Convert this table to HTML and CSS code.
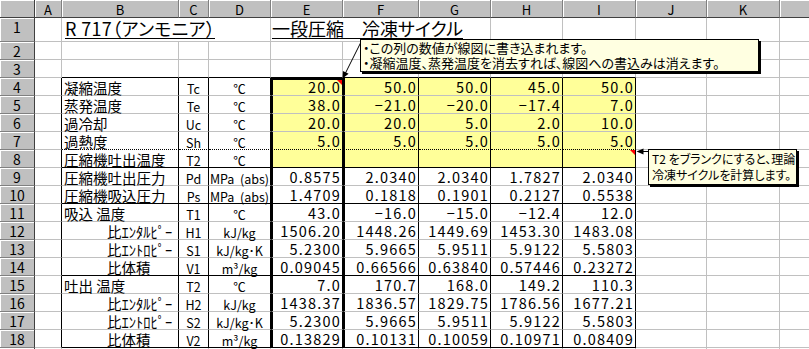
FILE: index.html
```html
<!DOCTYPE html>
<html lang="ja">
<head>
<meta charset="utf-8">
<title>R717 一段圧縮 冷凍サイクル</title>
<link rel="stylesheet" href="styles.css">
</head>
<body>
<div class="wrap">
  <div class="sheet">
    <div class="corner"></div><div class="ch">A</div><div class="ch">B</div><div class="ch">C</div><div class="ch">D</div><div class="ch">E</div><div class="ch">F</div><div class="ch">G</div><div class="ch">H</div><div class="ch">I</div><div class="ch">J</div><div class="ch">K</div><div class="ch"></div>

    <div class="rh">1</div><div></div>
    <div class="title title1 s3"><span>R 717（アンモニア）</span></div>
    <div class="title title2 s3"><span>一段圧縮　冷凍サイクル</span></div>
    <div></div><div></div><div></div><div></div><div></div>

    <div class="rh">2</div><div></div><div></div><div></div><div></div><div></div><div></div><div></div><div></div><div></div><div></div><div></div><div></div>

    <div class="rh">3</div><div></div><div class="tb"></div><div class="tb"></div><div class="tb"></div><div class="tb"></div><div class="tb"></div><div class="tb"></div><div class="tb"></div><div class="tb"></div><div></div><div></div><div></div>

    <div class="rh">4</div><div class="bk"></div>
    <div class="bk lbl">凝縮温度</div><div class="bk sym">Tc</div><div class="bk unit">℃</div>
    <div class="bk e top y num note">20.0</div><div class="bk f y num">50.0</div><div class="bk y num">50.0</div><div class="bk y num">45.0</div><div class="bk y num">50.0</div>
    <div></div><div></div><div></div>

    <div class="rh">5</div><div class="bk"></div>
    <div class="bk lbl">蒸発温度</div><div class="bk sym">Te</div><div class="bk unit">℃</div>
    <div class="bk e y num">38.0</div><div class="bk f y num">−21.0</div><div class="bk y num">−20.0</div><div class="bk y num">−17.4</div><div class="bk y num">7.0</div>
    <div></div><div></div><div></div>

    <div class="rh">6</div><div class="bk"></div>
    <div class="bk lbl">過冷却</div><div class="bk sym">Uc</div><div class="bk unit">℃</div>
    <div class="bk e y num">20.0</div><div class="bk f y num">20.0</div><div class="bk y num">5.0</div><div class="bk y num">2.0</div><div class="bk y num">10.0</div>
    <div></div><div></div><div></div>

    <div class="rh">7</div><div class="bk"></div>
    <div class="bk dot lbl">過熱度</div><div class="bk dot sym">Sh</div><div class="bk dot unit">℃</div>
    <div class="bk dot e y num">5.0</div><div class="bk dot f y num">5.0</div><div class="bk dot y num">5.0</div><div class="bk dot y num">5.0</div><div class="bk dot y num">5.0</div>
    <div></div><div></div><div></div>

    <div class="rh">8</div><div class="bk"></div>
    <div class="bk gb lbl">圧縮機吐出温度</div><div class="bk gb sym">T2</div><div class="bk gb unit">℃</div>
    <div class="bk gb e y num"></div><div class="bk gb f y num"></div><div class="bk gb y num"></div><div class="bk gb y num"></div><div class="bk gb y num note"></div>
    <div></div><div></div><div></div>

    <div class="rh">9</div><div class="bk"></div>
    <div class="bk lbl">圧縮機吐出圧力</div><div class="bk sym">Pd</div><div class="bk unit">MPa&nbsp;&nbsp;(abs)</div>
    <div class="bk e num">0.8575</div><div class="bk f num">2.0340</div><div class="bk num">2.0340</div><div class="bk num">1.7827</div><div class="bk num">2.0340</div>
    <div></div><div></div><div></div>

    <div class="rh">10</div><div class="bk"></div>
    <div class="bk gb lbl">圧縮機吸込圧力</div><div class="bk gb sym">Ps</div><div class="bk gb unit">MPa&nbsp;&nbsp;(abs)</div>
    <div class="bk gb e num">1.4709</div><div class="bk gb f num">0.1818</div><div class="bk gb num">0.1901</div><div class="bk gb num">0.2127</div><div class="bk gb num">0.5538</div>
    <div></div><div></div><div></div>

    <div class="rh">11</div><div class="bk"></div>
    <div class="bk lbl">吸込 温度</div><div class="bk sym">T1</div><div class="bk unit">℃</div>
    <div class="bk e num">43.0</div><div class="bk f num">−16.0</div><div class="bk num">−15.0</div><div class="bk num">−12.4</div><div class="bk num">12.0</div>
    <div></div><div></div><div></div>

    <div class="rh">12</div><div class="bk"></div>
    <div class="bk lbl ind">比ｴﾝﾀﾙﾋﾟｰ</div><div class="bk sym">H1</div><div class="bk unit">kJ/kg</div>
    <div class="bk e num">1506.20</div><div class="bk f num">1448.26</div><div class="bk num">1449.69</div><div class="bk num">1453.30</div><div class="bk num">1483.08</div>
    <div></div><div></div><div></div>

    <div class="rh">13</div><div class="bk"></div>
    <div class="bk lbl ind">比ｴﾝﾄﾛﾋﾟｰ</div><div class="bk sym">S1</div><div class="bk unit">kJ/kg･K</div>
    <div class="bk e num">5.2300</div><div class="bk f num">5.9665</div><div class="bk num">5.9511</div><div class="bk num">5.9122</div><div class="bk num">5.5803</div>
    <div></div><div></div><div></div>

    <div class="rh">14</div><div class="bk"></div>
    <div class="bk gb lbl ind">比体積</div><div class="bk gb sym">V1</div><div class="bk gb unit">m³/kg</div>
    <div class="bk gb e num">0.09045</div><div class="bk gb f num">0.66566</div><div class="bk gb num">0.63840</div><div class="bk gb num">0.57446</div><div class="bk gb num">0.23272</div>
    <div></div><div></div><div></div>

    <div class="rh">15</div><div class="bk"></div>
    <div class="bk lbl">吐出 温度</div><div class="bk sym">T2</div><div class="bk unit">℃</div>
    <div class="bk e num">7.0</div><div class="bk f num">170.7</div><div class="bk num">168.0</div><div class="bk num">149.2</div><div class="bk num">110.3</div>
    <div></div><div></div><div></div>

    <div class="rh">16</div><div class="bk"></div>
    <div class="bk lbl ind">比ｴﾝﾀﾙﾋﾟｰ</div><div class="bk sym">H2</div><div class="bk unit">kJ/kg</div>
    <div class="bk e num">1438.37</div><div class="bk f num">1836.57</div><div class="bk num">1829.75</div><div class="bk num">1786.56</div><div class="bk num">1677.21</div>
    <div></div><div></div><div></div>

    <div class="rh">17</div><div class="bk"></div>
    <div class="bk lbl ind">比ｴﾝﾄﾛﾋﾟｰ</div><div class="bk sym">S2</div><div class="bk unit">kJ/kg･K</div>
    <div class="bk e num">5.2300</div><div class="bk f num">5.9665</div><div class="bk num">5.9511</div><div class="bk num">5.9122</div><div class="bk num">5.5803</div>
    <div></div><div></div><div></div>

    <div class="rh">18</div><div class="bk"></div>
    <div class="bk gb lbl ind">比体積</div><div class="bk gb sym">V2</div><div class="bk gb unit">m³/kg</div>
    <div class="bk gb e num">0.13829</div><div class="bk gb f num">0.10131</div><div class="bk gb num">0.10059</div><div class="bk gb num">0.10971</div><div class="bk gb num">0.08409</div>
    <div></div><div></div><div></div>

    <div class="rh"></div><div></div><div></div><div></div><div></div><div></div><div></div><div></div><div></div><div></div><div></div><div></div><div></div>
  </div>

  <svg class="arrows" width="809" height="349" viewBox="0 0 809 349" aria-hidden="true">
    <line x1="362" y1="40" x2="345.5" y2="73" stroke="#000" stroke-width="1"/>
    <polygon points="342.5,78.5 348.6,73.8 342.9,70.9" fill="#000"/>
    <line x1="649" y1="151.5" x2="642" y2="151.5" stroke="#000" stroke-width="1"/>
    <polygon points="636.5,151.5 643.5,148.5 643.5,154.5" fill="#000"/>
  </svg>

  <div class="cmt cmt1">・この列の数値が線図に書き込まれます。<br>・凝縮温度、蒸発温度を消去すれば、線図への書込みは消えます。</div>
  <div class="cmt cmt2">T2 をブランクにすると、理論<br>冷凍サイクルを計算します。</div>
</div>
</body>
</html>
```

FILE: styles.css
```css
* { box-sizing: border-box; }

html, body {
  margin: 0;
  padding: 0;
  background: #fff;
}

body {
  width: 809px;
  height: 349px;
  overflow: hidden;
  font-family: "Noto Sans CJK JP", "Noto Sans", sans-serif;
  color: #000;
}

.wrap {
  position: relative;
  width: 809px;
  height: 349px;
  overflow: hidden;
}

.sheet {
  display: grid;
  grid-template-columns: 35px 27px 117px 30px 62px 72px 76px 72px 72px 73px 71px 73px 72px;
  grid-template-rows: 18px 24px repeat(18, 18px);
  width: 852px;
}

.sheet > * {
  border-right: 1px solid #c0c0c0;
  border-bottom: 1px solid #c0c0c0;
  white-space: nowrap;
  font-size: 14.5px;
  line-height: 17px;
  font-variant-numeric: tabular-nums;
}

/* headers */
.corner, .ch, .rh {
  background: #c0c0c0;
  border-right-color: #808080;
  border-bottom-color: #808080;
  box-shadow: inset 1px 1px 0 #fff;
  text-align: center;
}
.ch {
  font-size: 13px;
  padding-top: 1px;
  border-bottom-color: #404040;
}
.corner { border-bottom-color: #404040; border-right-color: #404040; }
.rh {
  font-size: 14px;
  padding-top: 1px;
  border-right-color: #404040;
}

/* title row */
.s3 { grid-column: span 3; }
.title {
  font-size: 18px;
  line-height: 17px;
  padding: 2px 0 0 3px;
  font-feature-settings: "palt";
}
.title span {
  display: inline-block;
  padding-bottom: 1px;
  border-bottom: 1px solid #000;
}
.title1 { letter-spacing: 0.35px; }
.title2 { padding-left: 1px; }

/* table borders */
.bk { border-right-color: #000; }
.tb, .gb { border-bottom-color: #000; }
.dot { border-bottom: 1px dotted #000; }
.e, .f { border-left: 2px solid #000; }
.top { border-top: 2px solid #000; line-height: 13px; }
.y { background: #ffff99; }

/* cell contents */
.lbl { padding-left: 2px; padding-top: 1px; }
.ind { padding-left: 45px; }
.sym, .unit {
  font-size: 12.5px;
  text-align: center;
  padding-top: 2px;
}
.num {
  text-align: right;
  padding-right: 1px;
  letter-spacing: 1.2px;
}

/* comment indicator */
.note { position: relative; }
.note::after {
  content: "";
  position: absolute;
  top: 0;
  right: 0;
  border-top: 5px solid #ff0000;
  border-left: 5px solid transparent;
}

/* comments */
.arrows {
  position: absolute;
  left: 0;
  top: 0;
}
.cmt {
  position: absolute;
  background: #ffffe1;
  border: 1px solid #000;
  box-shadow: 2px 2px 0 #000;
  font-size: 13px;
  line-height: 15px;
  padding: 0 2px;
  white-space: nowrap;
  font-feature-settings: "palt";
}
.cmt1 {
  left: 360px;
  top: 39px;
  width: 399px;
  height: 33px;
}
.cmt2 {
  left: 648px;
  top: 149px;
  width: 149px;
  height: 36px;
  font-size: 12px;
  line-height: 16px;
  padding: 1px 3px;
}
```
